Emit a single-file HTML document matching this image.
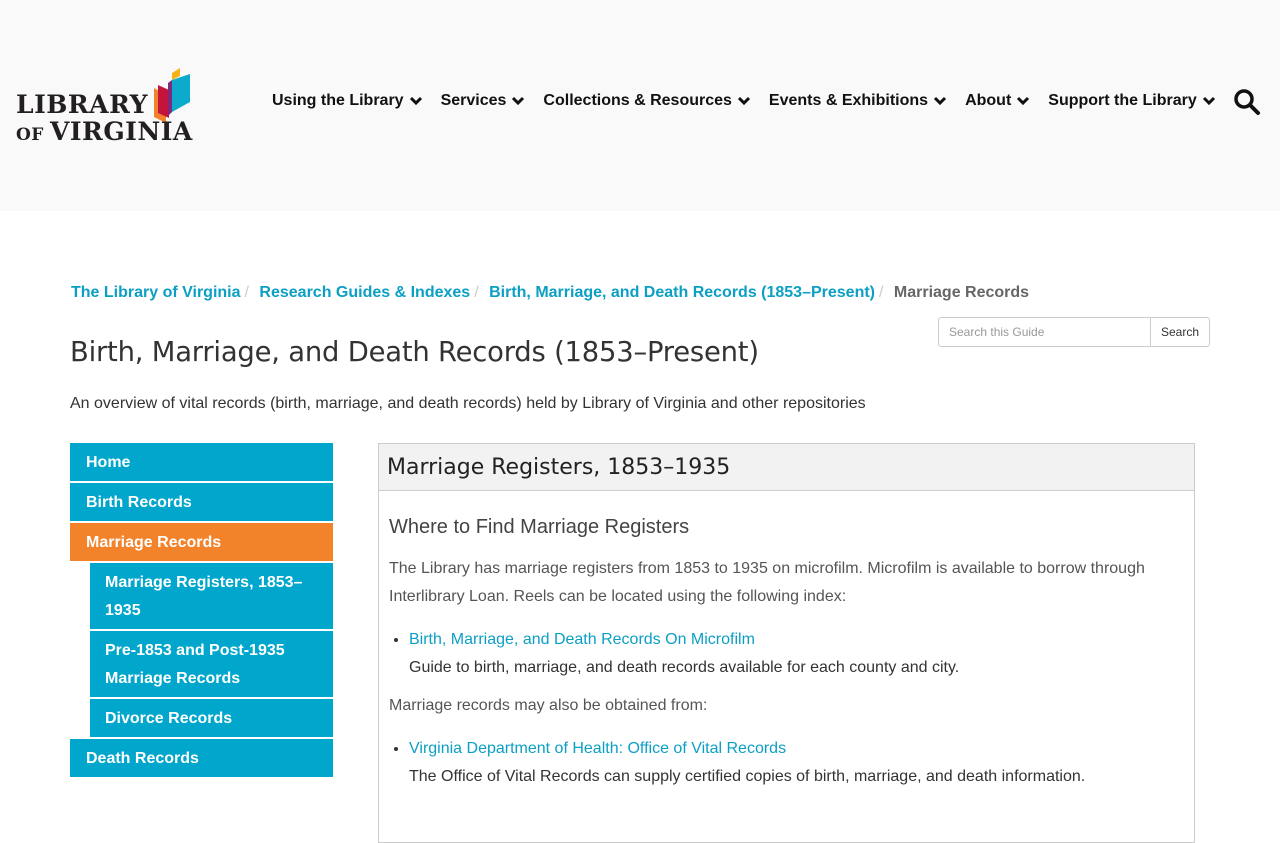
<!DOCTYPE html>
<html><head><meta charset="utf-8"><style>
*{box-sizing:border-box;margin:0;padding:0}
body{width:1280px;height:800px;overflow:hidden;background:#fff;font-family:"Liberation Sans",Arial,sans-serif;color:#333}
.hdr{height:211px;background:#f9f9f9;position:relative}
.logo{position:absolute;left:16px;top:68px}
.logo .t{font-family:"DejaVu Serif",serif;font-weight:bold;color:#231f20;letter-spacing:0.5px}
nav{position:absolute;top:92px;left:272px;display:flex;font-weight:bold;font-size:16px;color:#111}
nav span{margin-right:18px;display:flex;align-items:center;white-space:nowrap}
nav svg{margin-left:5px}
a{color:#0c9fc4;text-decoration:none}
.bc{position:absolute;top:284px;left:71px;font-size:16px;font-weight:bold}
.bc .s{color:#ccc;font-weight:normal;margin:0 6px 0 4px}
h1{position:absolute;top:337px;left:70px;font-family:"DejaVu Sans",sans-serif;font-weight:normal;font-size:27.4px;color:#333;letter-spacing:-0.2px;white-space:nowrap}
.sub{position:absolute;top:395px;left:70px;font-size:16px}
.srch{position:absolute;top:317px;left:938px;display:flex}
.srch .i{width:213px;height:30px;border:1px solid #ccc;border-radius:3px 0 0 3px;font-size:12px;color:#999;padding:7px 10px}
.srch .b{width:59px;height:30px;border:1px solid #ccc;border-left:none;border-radius:0 3px 3px 0;font-size:12px;color:#333;padding:7px 10px}
.side{position:absolute;left:70px;top:443px;width:263px}
.side div{background:#00a6cb;color:#fff;font-weight:bold;font-size:16px;padding:1px 16px 0;margin-bottom:2px;line-height:37px;height:38px}
.side .on{background:#f3832a}
.side .c{margin-left:20px;line-height:28px;padding:6px 15px 4px;height:auto}
.box{position:absolute;left:378px;top:443px;width:817px;height:400px;border:1px solid #ccc}
.box .h{background:#f2f2f2;border-bottom:1px solid #ccc;height:47px;padding:11px 8px 0;font-family:"DejaVu Sans",sans-serif;font-size:22px;color:#222}
.bd{padding:24px 10px;font-size:16px;color:#555;line-height:28px}
.bd h2{font-weight:normal;font-size:20px;color:#444;margin-bottom:16px;line-height:24px}
.bd ul{margin:15px 0 10px 20px}
.bd li{color:#333}
</style></head><body>
<div class="hdr">
 <div class="logo">
  <svg width="180" height="78" viewBox="0 0 180 78" style="position:absolute;left:0;top:0">
   <path d="M138 20 L150 27 L150 55 L138 49 Z" fill="#f3832a"/>
   <path d="M142 17 L153 22 L153 50 L142 45 Z" fill="#c4143c"/>
   <path d="M152 15 L156 12 L156 44 L152 48Z" fill="#7b2a7f"/>
   <path d="M156 12 L164 8 L164 0 L156 5Z" fill="#f7b21a"/>
   <path d="M156 12 L174 6 L174 34 L156 44 Z" fill="#0cabce"/>
  </svg>
  <div class="t" style="position:absolute;top:22px;left:0;font-size:25px;white-space:nowrap">LIBRARY</div>
  <div class="t" style="position:absolute;top:49px;left:0;white-space:nowrap"><span style="font-size:17px">OF</span> <span style="font-size:25px">VIRGINIA</span></div>
 </div>
 <nav>
  <span>Using the Library<svg width="14" height="10" viewBox="0 0 14 10"><path d="M2 2l5 5 5-5" stroke="#111" stroke-width="3" fill="none"/></svg></span>
  <span>Services<svg width="14" height="10" viewBox="0 0 14 10"><path d="M2 2l5 5 5-5" stroke="#111" stroke-width="3" fill="none"/></svg></span>
  <span>Collections &amp; Resources<svg width="14" height="10" viewBox="0 0 14 10"><path d="M2 2l5 5 5-5" stroke="#111" stroke-width="3" fill="none"/></svg></span>
  <span>Events &amp; Exhibitions<svg width="14" height="10" viewBox="0 0 14 10"><path d="M2 2l5 5 5-5" stroke="#111" stroke-width="3" fill="none"/></svg></span>
  <span>About<svg width="14" height="10" viewBox="0 0 14 10"><path d="M2 2l5 5 5-5" stroke="#111" stroke-width="3" fill="none"/></svg></span>
  <span>Support the Library<svg width="14" height="10" viewBox="0 0 14 10"><path d="M2 2l5 5 5-5" stroke="#111" stroke-width="3" fill="none"/></svg></span>
 </nav>
 <svg style="position:absolute;left:1233px;top:88px" width="28" height="28" viewBox="0 0 28 28"><circle cx="11" cy="11" r="8" stroke="#111" stroke-width="3.5" fill="none"/><path d="M17 17l8 8" stroke="#111" stroke-width="4" stroke-linecap="round"/></svg>
</div>
<div class="bc"><a>The Library of Virginia</a><span class="s">/</span> <a>Research Guides &amp; Indexes</a><span class="s">/</span> <a>Birth, Marriage, and Death Records (1853–Present)</a><span class="s">/</span> <span style="color:#666">Marriage Records</span></div>
<div class="srch"><div class="i">Search this Guide</div><div class="b">Search</div></div>
<h1>Birth, Marriage, and Death Records (1853–Present)</h1>
<div class="sub">An overview of vital records (birth, marriage, and death records) held by Library of Virginia and other repositories</div>
<div class="side">
 <div>Home</div>
 <div>Birth Records</div>
 <div class="on">Marriage Records</div>
 <div class="c">Marriage Registers, 1853–<br>1935</div>
 <div class="c">Pre-1853 and Post-1935<br>Marriage Records</div>
 <div class="c">Divorce Records</div>
 <div>Death Records</div>
</div>
<div class="box">
 <div class="h">Marriage Registers, 1853–1935</div>
 <div class="bd">
  <h2>Where to Find Marriage Registers</h2>
  <p>The Library has marriage registers from 1853 to 1935 on microfilm. Microfilm is available to borrow through Interlibrary Loan. Reels can be located using the following index:</p>
  <ul><li><a>Birth, Marriage, and Death Records On Microfilm</a><br><span>Guide to birth, marriage, and death records available for each county and city.</span></li></ul>
  <p>Marriage records may also be obtained from:</p>
  <ul><li><a>Virginia Department of Health: Office of Vital Records</a><br><span>The Office of Vital Records can supply certified copies of birth, marriage, and death information.</span></li></ul>
 </div>
</div>
</body></html>
